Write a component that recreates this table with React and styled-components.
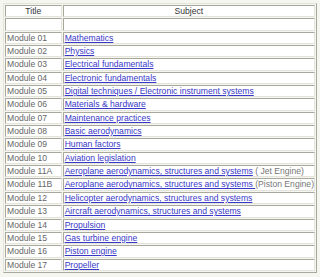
import React from 'react';
import styled, { createGlobalStyle } from 'styled-components';

const GlobalStyle = createGlobalStyle`
  html, body {
    margin: 0;
    padding: 0;
    background: #f6f6f0;
  }
`;

const Page = styled.div`
  padding: 3px 3px 0 3px;
  font-family: "Liberation Sans", Arial, sans-serif;
`;

const Table = styled.table`
  width: 314px;
  border-collapse: separate;
  border-spacing: 1px;
  border: 1px solid;
  border-color: #e4e4dc #a8a89c #a8a89c #e4e4dc;
  background: #f6f6f0;
`;

const HeadCell = styled.th`
  background: #ffffff;
  border: 1px solid;
  border-color: #a8a89c #e4e4dc #e4e4dc #a8a89c;
  padding: 1px 1px 0 1px;
  font-size: 8.6px;
  line-height: 9.35px;
  font-weight: normal;
  color: #333;
  text-align: center;
  width: ${(p) => p.$w || 'auto'};
`;

const Cell = styled.td`
  background: #ffffff;
  border: 1px solid;
  border-color: #a8a89c #e4e4dc #e4e4dc #a8a89c;
  padding: 1px 0 0 1px;
  font-size: 8.6px;
  line-height: 9.35px;
  color: #666;
  white-space: nowrap;
`;

const Link = styled.a`
  color: #3838c8;
  text-decoration: underline;
`;

const Note = styled.span`
  color: #777;
`;

const modules = [
  ['Module 01', 'Mathematics'],
  ['Module 02', 'Physics'],
  ['Module 03', 'Electrical fundamentals'],
  ['Module 04', 'Electronic fundamentals'],
  ['Module 05', 'Digital techniques / Electronic instrument systems'],
  ['Module 06', 'Materials & hardware'],
  ['Module 07', 'Maintenance practices'],
  ['Module 08', 'Basic aerodynamics'],
  ['Module 09', 'Human factors'],
  ['Module 10', 'Aviation legislation'],
  ['Module 11A', 'Aeroplane aerodynamics, structures and systems', ' ( Jet Engine)'],
  ['Module 11B', 'Aeroplane aerodynamics, structures and systems ', '(Piston Engine)'],
  ['Module 12', 'Helicopter aerodynamics, structures and systems'],
  ['Module 13', 'Aircraft aerodynamics, structures and systems'],
  ['Module 14', 'Propulsion'],
  ['Module 15', 'Gas turbine engine'],
  ['Module 16', 'Piston engine'],
  ['Module 17', 'Propeller'],
];

export default function App() {
  return (
    <Page>
      <GlobalStyle />
      <Table>
        <thead>
          <tr>
            <HeadCell $w="53px">Title</HeadCell>
            <HeadCell>Subject</HeadCell>
          </tr>
        </thead>
        <tbody>
          <tr>
            <Cell>&nbsp;</Cell>
            <Cell>&nbsp;</Cell>
          </tr>
          {modules.map(([title, subject, note]) => (
            <tr key={title}>
              <Cell>{title}</Cell>
              <Cell>
                <Link href="#">{subject}</Link>
                {note && <Note>{note}</Note>}
              </Cell>
            </tr>
          ))}
        </tbody>
      </Table>
    </Page>
  );
}
